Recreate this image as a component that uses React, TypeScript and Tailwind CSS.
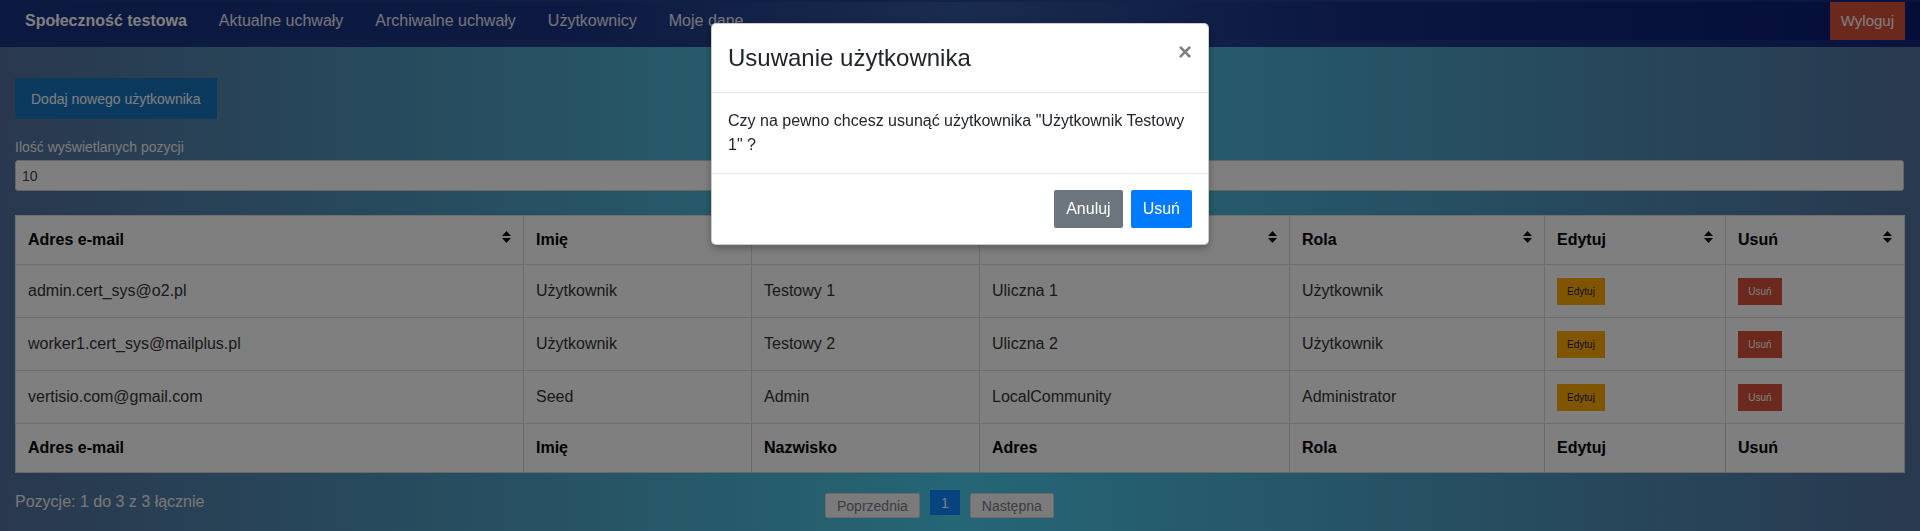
import React from 'react'

type Row = {
  email: string
  firstName: string
  lastName: string
  address: string
  role: string
}

const rows: Row[] = [
  { email: 'admin.cert_sys@o2.pl', firstName: 'Użytkownik', lastName: 'Testowy 1', address: 'Uliczna 1', role: 'Użytkownik' },
  { email: 'worker1.cert_sys@mailplus.pl', firstName: 'Użytkownik', lastName: 'Testowy 2', address: 'Uliczna 2', role: 'Użytkownik' },
  { email: 'vertisio.com@gmail.com', firstName: 'Seed', lastName: 'Admin', address: 'LocalCommunity', role: 'Administrator' },
]

const columns = ['Adres e-mail', 'Imię', 'Nazwisko', 'Adres', 'Rola', 'Edytuj', 'Usuń']
const widths = ['w-[508px]', 'w-[228px]', 'w-[228px]', 'w-[310px]', 'w-[255px]', 'w-[181px]', 'w-[179px]']

function SortIcon() {
  return (
    <svg width="9" height="12" viewBox="0 0 9 12" className="mb-[6px] shrink-0">
      <polygon points="0,5 4.5,0 9,5" fill="#111" />
      <polygon points="0,7 4.5,12 9,7" fill="#111" />
    </svg>
  )
}

export default function App() {
  return (
    <div className="relative h-[531px] w-full overflow-hidden font-['Liberation_Sans',Arial,sans-serif] bg-[linear-gradient(to_right,#52709c_0%,#4cc2e0_45%,#4accec_50%,#52729e_100%)]">
      {/* navbar */}
      <div className="h-[47px] pt-[2px] bg-[linear-gradient(to_right,#1a3480_0%,#24418e_45%,#284696_55%,#12287c_100%)]">
        <div className="flex h-[38px] items-center pl-[25px] pr-[15px] bg-[linear-gradient(to_right,#16307e_0%,#1a3384_30%,#34589e_50%,#162e82_70%,#081c70_100%)]">
          <span className="text-base font-bold text-white">Społeczność testowa</span>
          <nav className="ml-[32px] flex gap-[32px] text-base text-white/90">
            <span>Aktualne uchwały</span>
            <span>Archiwalne uchwały</span>
            <span>Użytkownicy</span>
            <span>Moje dane</span>
          </nav>
          <button className="ml-auto h-[38px] px-[11px] text-[15px] text-white bg-[#d6503a]">Wyloguj</button>
        </div>
      </div>

      <div className="pl-[15px] pr-[16px]">
        <button className="mt-[31px] h-[41px] px-4 text-sm text-white bg-[#1674bc]">Dodaj nowego użytkownika</button>

        <label className="mt-[18px] mb-[3px] block h-[20px] text-sm leading-[20px] text-[#f5f5f5]">Ilość wyświetlanych pozycji</label>
        <div className="flex h-[31px] items-center rounded-[3px] border border-[#cccccc] bg-white px-[6px] text-sm text-[#444]">10</div>

        <table className="mt-[24px] w-[1889px] table-fixed border-collapse bg-white text-base">
          <colgroup>
            {widths.map((w, i) => (
              <col key={i} className={w} />
            ))}
          </colgroup>
          <thead>
            <tr className="h-[49px]">
              {columns.map(c => (
                <th key={c} className="border border-[#dcdcdc] px-3 align-middle text-left font-bold text-black">
                  <div className="flex items-center justify-between">
                    <span>{c}</span>
                    <SortIcon />
                  </div>
                </th>
              ))}
            </tr>
          </thead>
          <tbody>
            {rows.map(r => (
              <tr key={r.email} className="h-[53px] text-[#333]">
                <td className="border border-[#dcdcdc] px-3 align-middle">{r.email}</td>
                <td className="border border-[#dcdcdc] px-3 align-middle">{r.firstName}</td>
                <td className="border border-[#dcdcdc] px-3 align-middle">{r.lastName}</td>
                <td className="border border-[#dcdcdc] px-3 align-middle">{r.address}</td>
                <td className="border border-[#dcdcdc] px-3 align-middle">{r.role}</td>
                <td className="border border-[#dcdcdc] px-3 align-middle">
                  <button className="block h-[27px] w-[48px] text-[10px] text-[#222] bg-[#ffab00]">Edytuj</button>
                </td>
                <td className="border border-[#dcdcdc] px-3 align-middle">
                  <button className="block h-[27px] w-[44px] text-[10px] text-white bg-[#d6503a]">Usuń</button>
                </td>
              </tr>
            ))}
          </tbody>
          <tfoot>
            <tr className="h-[49px]">
              {columns.map(c => (
                <th key={c} className="border border-[#d0d0d0] px-3 align-middle text-left font-bold text-black">{c}</th>
              ))}
            </tr>
          </tfoot>
        </table>

        <div className="mt-[17px] flex items-start">
          <div className="w-[810px] text-base leading-6 text-[#f0f0f0]">Pozycje: 1 do 3 z 3 łącznie</div>
          <div className="flex items-start gap-[10px] text-sm">
            <button className="mt-[3px] h-[25px] rounded-[2px] border border-[#d4d4d4] bg-[#f6f6f6] px-[11px] text-[#7a7a88]">Poprzednia</button>
            <button className="h-[25px] w-[30px] bg-[#0a88ff] text-white">1</button>
            <button className="mt-[3px] h-[25px] rounded-[2px] border border-[#d4d4d4] bg-[#f6f6f6] px-[11px] text-[#7a7a88]">Następna</button>
          </div>
        </div>
      </div>

      {/* backdrop */}
      <div className="fixed inset-0 z-40 bg-black/50" />

      {/* modal */}
      <div className="fixed inset-0 z-50 flex items-start justify-center">
        <div className="mt-[23px] w-[498px] rounded-[5px] border border-black/20 bg-white text-[#212529] shadow-[0_3px_9px_rgba(0,0,0,0.3)]">
          <div className="flex items-start justify-between border-b border-[#e5e5e5] p-4">
            <h5 className="text-[24px] leading-[36px]">Usuwanie użytkownika</h5>
            <button className="-m-4 p-4 text-[24px] font-bold leading-none text-black/50">×</button>
          </div>
          <div className="p-4 text-base leading-6">
            Czy na pewno chcesz usunąć użytkownika "Użytkownik Testowy 1" ?
          </div>
          <div className="flex justify-end gap-2 border-t border-[#e5e5e5] p-4">
            <button className="h-[38px] rounded-[2px] bg-[#6c757d] px-3 text-base text-white">Anuluj</button>
            <button className="h-[38px] rounded-[2px] bg-[#007bff] px-3 text-base text-white">Usuń</button>
          </div>
        </div>
      </div>
    </div>
  )
}
